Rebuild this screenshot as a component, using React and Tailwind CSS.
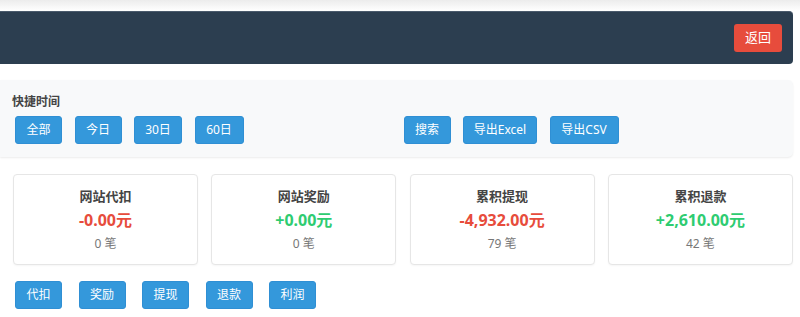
import React from "react";

const font = { fontFamily: '"Noto Sans", "Noto Sans CJK SC", sans-serif' };

function Btn({ children, w }) {
  return (
    <button
      className={`h-[28px] ${w} rounded-[3px] border border-[#2f8fd4] bg-[#3498db] text-[12px] text-white leading-none`}
    >
      {children}
    </button>
  );
}

const cards = [
  { t: "网站代扣", v: "-0.00元", c: "text-[#e74c3c]", n: "0 笔" },
  { t: "网站奖励", v: "+0.00元", c: "text-[#2ecc71]", n: "0 笔" },
  { t: "累积提现", v: "-4,932.00元", c: "text-[#e74c3c]", n: "79 笔" },
  { t: "累积退款", v: "+2,610.00元", c: "text-[#2ecc71]", n: "42 笔" },
];

export default function App() {
  return (
    <div className="w-[800px] h-[317px] overflow-hidden bg-white" style={font}>
      <div className="h-[11px] bg-gradient-to-b from-[#ececec] to-white" />
      <div className="mr-[7px] h-[53px] rounded-r-[4px] border-t border-[#4a5a6c] bg-[#2c3e50] flex items-center justify-end pr-[11px]">
        <button className="h-[28px] w-[48px] rounded-[3px] bg-[#e74c3c] text-[13px] text-white">
          返回
        </button>
      </div>
      <div className="mt-[16px] mr-[7px] h-[77px] rounded-r-[5px] bg-[#f8f9fa] shadow-[0_1px_2px_rgba(0,0,0,0.08)] pl-[12px] pt-[15px]">
        <div className="text-[12px] font-bold text-[#444] leading-[14px]">快捷时间</div>
        <div className="mt-[7px] flex items-center">
          <div className="ml-[3px] flex gap-[12.5px]">
            <Btn w="w-[47px]">全部</Btn>
            <Btn w="w-[47px]">今日</Btn>
            <Btn w="w-[48px]">30日</Btn>
            <Btn w="w-[49px]">60日</Btn>
          </div>
          <div className="ml-[160px] flex gap-[12.5px]">
            <Btn w="w-[47px]">搜索</Btn>
            <Btn w="w-[74px]">导出Excel</Btn>
            <Btn w="w-[69px]">导出CSV</Btn>
          </div>
        </div>
      </div>
      <div className="mt-[17px] ml-[-185.3px] grid grid-cols-[repeat(5,185px)] gap-x-[13.3px]">
        <div className="h-[91px] rounded-[4px] border border-[#e6e6e6] bg-white" />
        {cards.map((c) => (
          <div
            key={c.t}
            className="h-[91px] rounded-[4px] border border-[#e6e6e6] bg-white shadow-[0_1px_2px_rgba(0,0,0,0.04)] flex flex-col items-center pt-[12px]"
          >
            <div className="text-[13px] font-bold text-[#444] leading-[18px]">{c.t}</div>
            <div className={`mt-[4px] text-[16px] font-bold leading-[22px] ${c.c}`}>{c.v}</div>
            <div className="mt-[5px] text-[12px] text-[#777] leading-[16px]">{c.n}</div>
          </div>
        ))}
      </div>
      <div className="mt-[16px] ml-[15px] flex gap-[16.5px]">
        <Btn w="w-[47px]">代扣</Btn>
        <Btn w="w-[47px]">奖励</Btn>
        <Btn w="w-[47px]">提现</Btn>
        <Btn w="w-[47px]">退款</Btn>
        <Btn w="w-[47px]">利润</Btn>
      </div>
    </div>
  );
}
